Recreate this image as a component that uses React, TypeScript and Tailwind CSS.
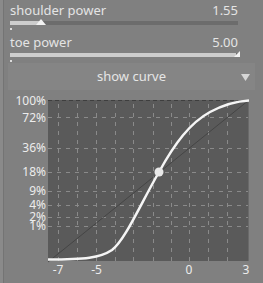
const ylabels = [
  { t: "100%", y: 100.5 },
  { t: "72%", y: 117.5 },
  { t: "36%", y: 148 },
  { t: "18%", y: 172 },
  { t: "9%", y: 191 },
  { t: "4%", y: 204.5 },
  { t: "2%", y: 216.5 },
  { t: "1%", y: 226 },
];

const xlabels = [
  { t: "-7", x: 58 },
  { t: "-5", x: 96.5 },
  { t: "0", x: 189 },
  { t: "3", x: 246 },
];

const hGrid = [117, 148, 172, 191, 205, 217, 226];
const vGrid = [58, 77, 96, 115, 133, 153, 171, 189, 208, 227];

function Slider({ label, value, pct }: { label: string; value: string; pct: number }) {
  const left = 10;
  const width = 228;
  const pos = Math.min(width - 2, Math.round(width * pct));
  return (
    <div className="relative h-[32px] text-[13px] text-[#e4e4e4]">
      <div className="flex justify-between pl-[10px] pr-[25px] leading-[16px]">
        <span>{label}</span>
        <span>{value}</span>
      </div>
      <div className="absolute top-[19px] h-[4px] bg-[#6c6c6c]" style={{ left, width }}>
        <div className="h-full bg-[#cdcdcd]" style={{ width: pos }} />
      </div>
      <svg className="absolute top-[16px]" style={{ left: left + pos - 6 }} width="12" height="8">
        <polygon points={pct >= 1 ? "4,7 10,7 10,1" : "1,7 11,7 6,1"} fill="#f2f2f2" />
      </svg>
      <div className="absolute left-[10px] top-[26px] h-[2px] w-[2px] bg-[#dcdcdc]" />
    </div>
  );
}

export default function App() {
  return (
    <div
      className="w-[263px] h-[283px] overflow-hidden bg-[#808080] border-l-[3px] border-[#8a8a8a] relative"
      style={{ fontFamily: '"Noto Sans", "Open Sans", sans-serif' }}
    >
      <div className="absolute left-0 top-0 h-full w-px bg-[#747474]" />
      <div className="-ml-[3px] pt-[2px]">
        <Slider label="shoulder power" value="1.55" pct={0.135} />
        <Slider label="toe power" value="5.00" pct={1} />

        <div className="mx-[8px] mt-[-3px] h-[27px] bg-[#858585] flex items-center justify-center relative text-[13px] text-[#e6e6e6]">
          <span className="leading-none -mt-[1px]">show curve</span>
          <svg className="absolute right-[5px] top-[11px]" width="9" height="8">
            <polygon points="0,0 9,0 4.5,7" fill="#d6d6d6" />
          </svg>
        </div>
      </div>

      <svg className="absolute left-[-3px] top-0" width="263" height="283">
        <rect x="48" y="100" width="201" height="161" fill="#5a5a5a" />
        <line x1="48" y1="100.5" x2="249" y2="100.5" stroke="#3e3e3e" strokeDasharray="4 3" />
        <line x1="248.5" y1="100" x2="248.5" y2="261" stroke="#6a6a6a" />
        {hGrid.map((y) => (
          <line key={y} x1="48" y1={y + 0.5} x2="248" y2={y + 0.5} stroke="#8a8a8a" strokeDasharray="4 5" />
        ))}
        {vGrid.map((x) => (
          <line key={x} x1={x + 0.5} y1="101" x2={x + 0.5} y2="261" stroke="#8a8a8a" strokeDasharray="4 5" strokeDashoffset="-3" />
        ))}
        <line x1="48" y1="262" x2="249" y2="100" stroke="#3f3f3f" strokeWidth="0.8" />
        <path
          d="M48,259.5 C85,259.5 100,258 112,250 C125,240 140,205 159,172 C175,143 190,123 210,112 C225,104 240,101 249,100.5"
          fill="none"
          stroke="#f5f5f5"
          strokeWidth="2.5"
        />
        <circle cx="159" cy="172" r="4.5" fill="#e8e8e8" />
        {ylabels.map((l) => (
          <text key={l.t} x="46" y={l.y + 4.3} textAnchor="end" fontSize="12" fill="#ececec">
            {l.t}
          </text>
        ))}
        {xlabels.map((l) => (
          <text key={l.t} x={l.x} y="274" textAnchor="middle" fontSize="12" fill="#ececec">
            {l.t}
          </text>
        ))}
      </svg>
    </div>
  );
}
